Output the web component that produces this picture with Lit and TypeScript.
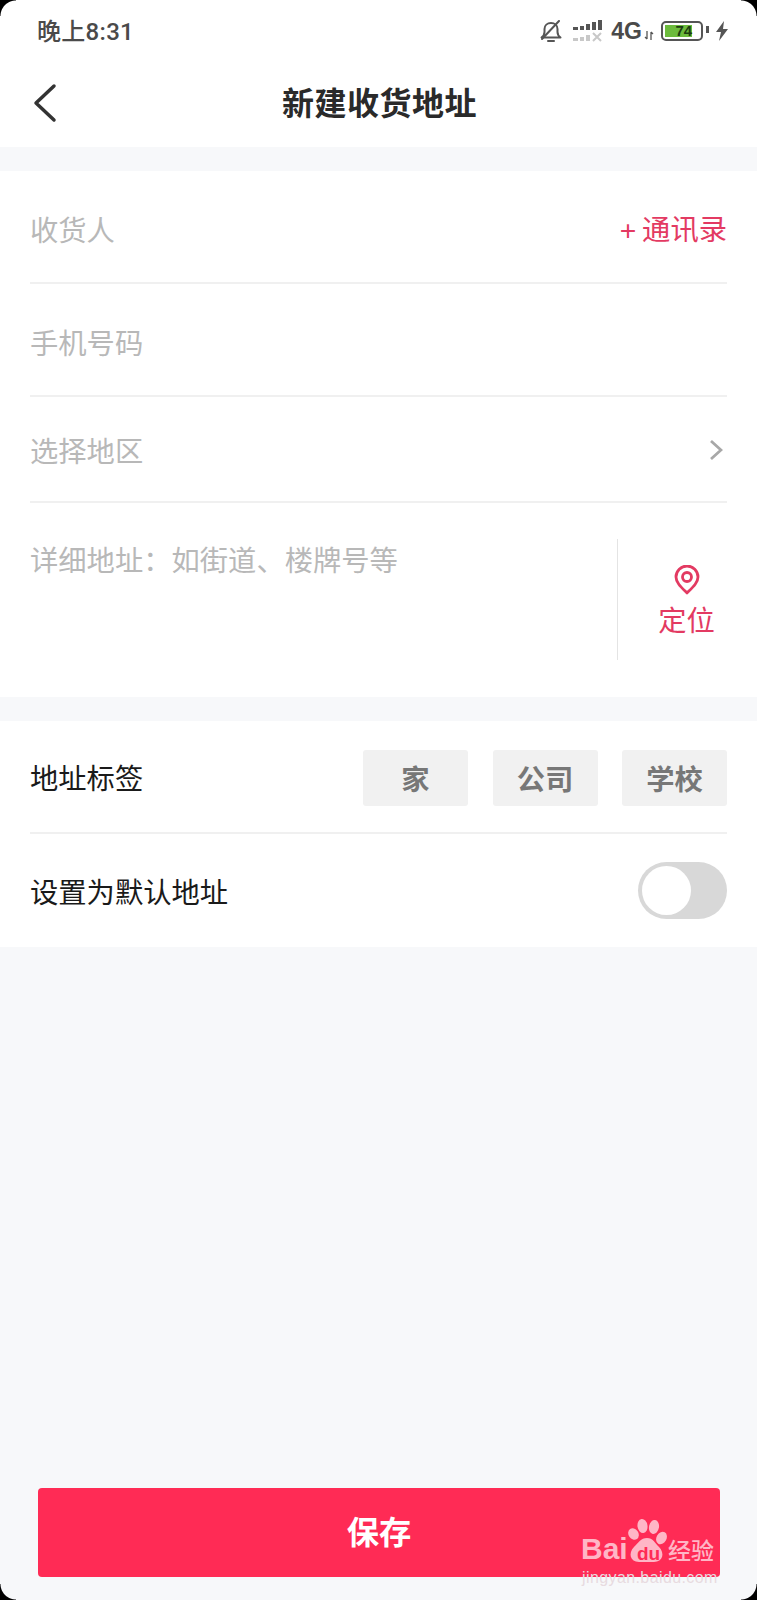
import { LitElement, html, css, svg } from 'lit';
import { customElement } from 'lit/decorators.js';

const bell = svg`<g fill="none" stroke="#555" stroke-width="2" stroke-linecap="round" stroke-linejoin="round">
  <path d="M1.500 17.500h19c-2-1.500-3-3-3-5.500V9c0-3.500-2.800-6-6.500-6S4.500 5.500 4.500 9v3c0 2.500-1 4-3 5.500z"/>
  <path d="M8 21h6"/><path d="M2 19L19 1"/></g>`;

@customElement('app-root')
export class AppRoot extends LitElement {
  static styles = css`
    :host {
      display: block;
      position: relative;
      height: 1600px;
      overflow: hidden;
      background: #f7f8fa;
      font-family: "Liberation Sans", "Noto Sans CJK SC", sans-serif;
    }
    .corner { position: absolute; width: 16px; height: 16px; }
    .tl { top: 0; left: 0; background: radial-gradient(circle at 100% 100%, transparent 15px, #000 16px); }
    .tr { top: 0; right: 0; background: radial-gradient(circle at 0 100%, transparent 15px, #000 16px); }
    .bl { bottom: 0; left: 0; background: radial-gradient(circle at 100% 0, transparent 15px, #000 16px); }
    .br { bottom: 0; right: 0; background: radial-gradient(circle at 0 0, transparent 15px, #000 16px); }

    .head { background: #fff; height: 147px; }
    .status {
      height: 60px;
      box-sizing: border-box;
      padding: 0 28px 0 37px;
      display: flex;
      align-items: center;
      justify-content: space-between;
      color: #4a4a4a;
    }
    .time {
      font-family: Roboto, "Noto Sans CJK SC", sans-serif;
      font-size: 24px;
      font-weight: 500;
      letter-spacing: 0.3px;
      padding-bottom: 1px;
    }
    .icons { display: flex; align-items: center; padding-top: 2px; }
    .net { font-size: 23px; font-weight: 700; margin-left: 8px; }
    .arrows { margin-left: 2px; margin-top: 8px; }
    .battery {
      width: 42px;
      height: 20px;
      box-sizing: border-box;
      border: 2.5px solid #555;
      border-radius: 5px;
      padding: 2px;
      position: relative;
      margin-left: 7px;
      display: flex;
    }
    .battery::after {
      content: '';
      position: absolute;
      right: -8px;
      top: 3px;
      width: 3px;
      height: 7px;
      background: #555;
    }
    .level {
      width: 80%;
      background: #6cbb3c;
      font-size: 15px;
      line-height: 11px;
      font-weight: 700;
      color: #1c3d10;
      text-align: right;
      white-space: nowrap;
    }
    .bolt { margin-left: 12px; }
    .signal { margin-left: 11px; }
    .nav { height: 87px; display: flex; align-items: center; justify-content: center; position: relative; }
    .nav h1 { margin: -6px 0 0; padding-left: 2px; font-size: 32px; letter-spacing: 0.5px; font-weight: 700; color: #2a2a2a; }
    .back { position: absolute; left: 33px; top: 23px; }

    section { background: #fff; margin-top: 24px; padding: 0 30px; }
    .row {
      height: 113px;
      box-sizing: border-box;
      display: flex;
      align-items: center;
      justify-content: space-between;
      border-bottom: 2px solid #f0f0f0;
      font-size: 28.3px;
      color: #b8b8b8;
    }
    .row > span { padding-top: 3px; }
    .row.area { height: 106px; }
    .row.area > span { padding-top: 0; }
    .chevron { margin-right: 4px; margin-top: 2px; }
    .row > span.link { color: #e33a62; word-spacing: -2px; padding-top: 2px; }
    .address { display: flex; height: 194px; padding-top: 36px; box-sizing: border-box; }
    .address .hint { flex: 1; font-size: 28.3px; color: #b8b8b8; line-height: 40px; padding-top: 2px; }
    .locate {
      width: 110px;
      height: 121px;
      border-left: 1px solid #e4e4e4;
      display: flex;
      flex-direction: column;
      align-items: center;
      gap: 6px;
      padding: 26px 2px 0 30px;
      box-sizing: border-box;
      font-size: 28.3px;
      color: #e33a62;
      line-height: 40px;
    }
    .row > span.label { color: #1a1a1a; padding-top: 0; }
    .tags { display: flex; gap: 24.5px; margin-top: 2px; }
    .tag {
      width: 105px;
      height: 56px;
      box-sizing: border-box;
      border-radius: 3px;
      background: #f1f1f1;
      color: #777;
      font-weight: 700;
      display: flex;
      align-items: center;
      justify-content: center;
    }
    .row.last { border-bottom: none; }
    .toggle {
      width: 89px;
      height: 57px;
      border-radius: 29px;
      background: #d8d8d8;
      padding: 4px;
      box-sizing: border-box;
    }
    .toggle i { display: block; width: 49px; height: 49px; border-radius: 50%; background: #fff; }

    .save {
      position: absolute;
      left: 38px;
      top: 1488px;
      width: 682px;
      height: 89px;
      padding-bottom: 6px;
      box-sizing: border-box;
      border-radius: 4px;
      background: #ff2b55;
      color: #fff;
      font-size: 32.3px;
      font-weight: 700;
      display: flex;
      align-items: center;
      justify-content: center;
    }
    .mark { position: absolute; left: 580px; top: 1518px; width: 140px; height: 66px; color: #ffb6c6; }
    .mark svg { position: absolute; left: 48px; top: 0; }
    .bai { position: absolute; left: 1px; top: 14px; font-size: 30px; line-height: 34px; font-weight: 700; }
    .du { position: absolute; left: 57px; top: 24px; font-size: 19px; line-height: 24px; font-weight: 700; color: #ff2b55; }
    .jy { position: absolute; left: 88px; top: 18px; font-size: 23px; line-height: 30px; font-weight: 500; white-space: nowrap; }
    .url {
      position: absolute;
      left: 2px;
      top: 50px;
      font-size: 16px;
      line-height: 20px;
      letter-spacing: 0.4px;
      color: #e8dbe0;
      white-space: nowrap;
    }
  `;

  private signal() {
    const top = [[0, 7, 5, 3], [7, 6, 4, 4], [13, 4, 4, 6], [19, 2, 4, 8], [25, 0, 4, 10]];
    const low = [[0, 18, 5, 3], [7, 17, 4, 4], [13, 15, 4, 6]];
    return html`<svg class="signal" width="30" height="22" viewBox="0 0 30 22">
      ${top.map(([x, y, w, h]) => svg`<rect x=${x} y=${y} width=${w} height=${h} fill="#555" />`)}
      ${low.map(([x, y, w, h]) => svg`<rect x=${x} y=${y} width=${w} height=${h} fill="#c8c8c8" />`)}
      <path d="M20 13l8 8M28 13l-8 8" stroke="#c8c8c8" stroke-width="2" fill="none" />
    </svg>`;
  }

  render() {
    return html`
      <div class="head">
        <div class="status">
          <span class="time">晚上8:31</span>
          <div class="icons">
            <svg width="22" height="23" viewBox="0 0 22 23">${bell}</svg>
            ${this.signal()}
            <span class="net">4G</span>
            <svg class="arrows" width="10" height="9" viewBox="0 0 10 9">
              <path d="M3 0v8M1 6l2 2M7 9V1M9 3L7 1" stroke="#555" stroke-width="1.300" fill="none" />
            </svg>
            <div class="battery"><div class="level">74</div></div>
            <svg class="bolt" width="14" height="20" viewBox="0 0 14 20">
              <path d="M9 0L1 11h5l-2 9 9-12H8z" fill="#555" />
            </svg>
          </div>
        </div>
        <div class="nav">
          <svg class="back" width="24" height="40" viewBox="0 0 24 40">
            <path d="M21 3L3 20l18 17" fill="none" stroke="#333" stroke-width="3.500" stroke-linecap="round" stroke-linejoin="round" />
          </svg>
          <h1>新建收货地址</h1>
        </div>
      </div>

      <section>
        <div class="row"><span>收货人</span><span class="link">+ 通讯录</span></div>
        <div class="row"><span>手机号码</span></div>
        <div class="row area">
          <span>选择地区</span>
          <svg class="chevron" width="14" height="22" viewBox="0 0 14 22">
            <path d="M2 2l10 9-10 9" fill="none" stroke="#a8a8a8" stroke-width="2.800" />
          </svg>
        </div>
        <div class="address">
          <div class="hint">详细地址：如街道、楼牌号等</div>
          <div class="locate">
            <svg width="26" height="30" viewBox="0 0 26 30">
              <path d="M13 28C7 22 2 17.500 2 12a11 11 0 0 1 22 0c0 5.500-5 10-11 16z" fill="none" stroke="#e33a62" stroke-width="2.800" stroke-linejoin="round" />
              <circle cx="13" cy="12" r="4.500" fill="none" stroke="#e33a62" stroke-width="2.800" />
            </svg>
            <span>定位</span>
          </div>
        </div>
      </section>

      <section>
        <div class="row">
          <span class="label">地址标签</span>
          <div class="tags">
            <span class="tag">家</span><span class="tag">公司</span><span class="tag">学校</span>
          </div>
        </div>
        <div class="row last">
          <span class="label">设置为默认地址</span>
          <div class="toggle"><i></i></div>
        </div>
      </section>

      <div class="save">保存</div>

      <div class="mark">
        <svg width="40" height="46" viewBox="0 0 40 46" fill="currentColor">
          <ellipse cx="5.500" cy="16" rx="5" ry="6" transform="rotate(-35 5.500 16)" />
          <ellipse cx="14.500" cy="8" rx="5" ry="7" transform="rotate(-8 14.500 8)" />
          <ellipse cx="26" cy="9" rx="5" ry="7" transform="rotate(10 26 9)" />
          <ellipse cx="33.500" cy="20" rx="5" ry="6.500" transform="rotate(30 33.500 20)" />
          <path d="M19 20c6 0 8 5 12 9 6 6 4 15-5 15H11C2 44 0 35 6 29c4-4 7-9 13-9z" />
        </svg>
        <span class="bai">Bai</span>
        <span class="du">du</span>
        <span class="jy">经验</span>
        <span class="url">jingyan.baidu.com</span>
      </div>

      <i class="corner tl"></i><i class="corner tr"></i><i class="corner bl"></i><i class="corner br"></i>
    `;
  }
}
